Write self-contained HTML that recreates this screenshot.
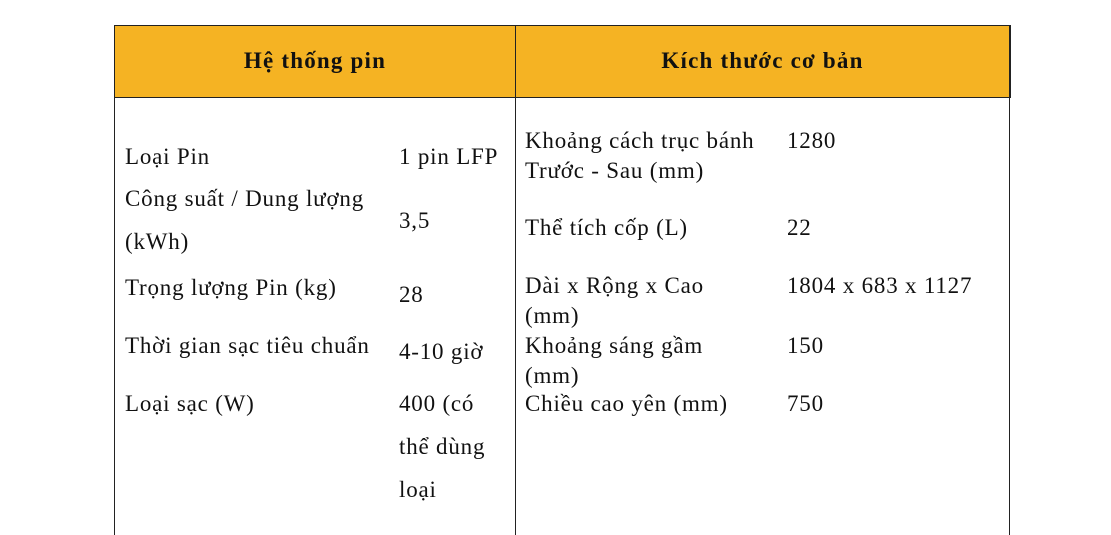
<!DOCTYPE html>
<html><head><meta charset="utf-8"><style>
body{margin:0;width:1111px;height:524px;background:#fff;position:relative;overflow:hidden;font-family:"Liberation Serif",serif;color:#111}
.t{position:absolute;font-size:23px;letter-spacing:0.8px;line-height:24px;white-space:nowrap}
.h{position:absolute;font-size:23px;letter-spacing:1.2px;font-weight:bold;line-height:24px;top:49px;text-align:center}
</style></head><body>
<div style="position:absolute;left:114px;top:25px;width:895px;height:71px;background:#F5B323;border:1px solid #222;border-bottom:1px solid #222"></div>
<div style="position:absolute;left:114px;top:25px;width:1px;height:510px;background:#222"></div>
<div style="position:absolute;left:1009px;top:25px;width:1px;height:510px;background:#222"></div>
<div style="position:absolute;left:515px;top:25px;width:1px;height:510px;background:#222"></div>
<div class="h" style="left:115px;width:400px">Hệ thống pin</div>
<div class="h" style="left:516px;width:493px">Kích thước cơ bản</div>

<div class="t" style="left:125px;top:145px">Loại Pin</div>
<div class="t" style="left:399px;top:145px">1 pin LFP</div>
<div class="t" style="left:125px;top:187px">Công suất / Dung lượng</div>
<div class="t" style="left:125px;top:230px">(kWh)</div>
<div class="t" style="left:399px;top:209px">3,5</div>
<div class="t" style="left:125px;top:276px">Trọng lượng Pin (kg)</div>
<div class="t" style="left:399px;top:283px">28</div>
<div class="t" style="left:125px;top:334px">Thời gian sạc tiêu chuẩn</div>
<div class="t" style="left:399px;top:340px">4-10 giờ</div>
<div class="t" style="left:125px;top:392px">Loại sạc (W)</div>
<div class="t" style="left:399px;top:392px">400 (có</div>
<div class="t" style="left:399px;top:435px">thể dùng</div>
<div class="t" style="left:399px;top:478px">loại</div>

<div class="t" style="left:525px;top:129px">Khoảng cách trục bánh</div>
<div class="t" style="left:525px;top:159px">Trước - Sau (mm)</div>
<div class="t" style="left:787px;top:129px">1280</div>
<div class="t" style="left:525px;top:216px">Thể tích cốp (L)</div>
<div class="t" style="left:787px;top:216px">22</div>
<div class="t" style="left:525px;top:274px">Dài x Rộng x Cao</div>
<div class="t" style="left:525px;top:304px">(mm)</div>
<div class="t" style="left:787px;top:274px">1804 x 683 x 1127</div>
<div class="t" style="left:525px;top:334px">Khoảng sáng gầm</div>
<div class="t" style="left:525px;top:364px">(mm)</div>
<div class="t" style="left:787px;top:334px">150</div>
<div class="t" style="left:525px;top:392px">Chiều cao yên (mm)</div>
<div class="t" style="left:787px;top:392px">750</div>
</body></html>
